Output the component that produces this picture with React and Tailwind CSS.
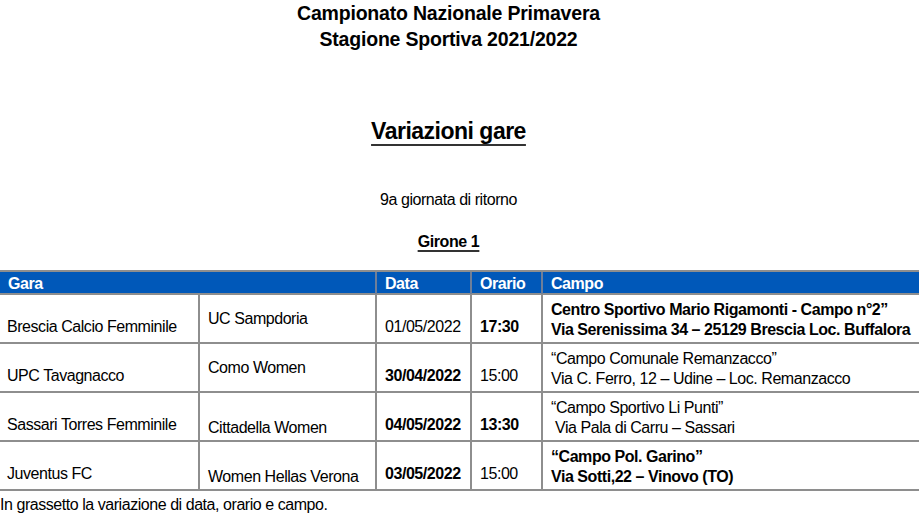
import React from "react";

const rows = [
  {
    a: "Brescia Calcio Femminile",
    b: "UC Sampdoria",
    bTop: "pt-[14px]",
    data: "01/05/2022",
    dataBold: false,
    ora: "17:30",
    oraBold: true,
    c1: "Centro Sportivo Mario Rigamonti - Campo n°2”",
    c2: "Via Serenissima 34 – 25129 Brescia Loc. Buffalora",
    cBold: true,
  },
  {
    a: "UPC Tavagnacco",
    b: "Como Women",
    bTop: "pt-[14px]",
    data: "30/04/2022",
    dataBold: true,
    ora: "15:00",
    oraBold: false,
    c1: "“Campo Comunale Remanzacco”",
    c2: "Via C. Ferro, 12 – Udine – Loc. Remanzacco",
    cBold: false,
  },
  {
    a: "Sassari Torres Femminile",
    b: "Cittadella Women",
    bTop: "pt-[25px]",
    data: "04/05/2022",
    dataBold: true,
    ora: "13:30",
    oraBold: true,
    c1: "“Campo Sportivo Li Punti”",
    c2: " Via Pala di Carru – Sassari",
    cBold: false,
  },
  {
    a: "Juventus FC",
    b: "Women Hellas Verona",
    bTop: "pt-[25px]",
    data: "03/05/2022",
    dataBold: true,
    ora: "15:00",
    oraBold: false,
    c1: "“Campo Pol. Garino”",
    c2: "Via Sotti,22 – Vinovo (TO)",
    cBold: true,
  },
];

export default function App() {
  return (
    <div className="w-[919px] h-[515px] overflow-hidden bg-white text-black font-['Liberation_Sans',Arial,sans-serif]">
      <div className="w-[897px] text-center">
        <div className="text-[19.5px] leading-[26px] font-bold tracking-[-0.2px]">
          <div>Campionato Nazionale Primavera</div>
          <div>Stagione Sportiva 2021/2022</div>
        </div>
        <div className="mt-[66px] text-[23px] leading-[26px] font-bold tracking-[-0.5px]">
          <span className="underline decoration-2 underline-offset-[5px] decoration-[#333]">
            Variazioni gare
          </span>
        </div>
        <div className="mt-[46px] text-[16px] leading-[20px] tracking-[-0.45px]">9a giornata di ritorno</div>
        <div className="mt-[22px] text-[16px] leading-[20px] font-bold tracking-[-0.4px]">
          <span className="underline decoration-[1.5px] underline-offset-[3px] decoration-[#333]">
            Girone 1
          </span>
        </div>
      </div>

      <div className="mt-[18px] border-t-2 border-[#8e8e8e] text-[16px] leading-[20px] tracking-[-0.45px]">
        <div className="grid grid-cols-[200px_177px_95px_71px_1fr] h-[23px] bg-[#0058b9] border-b-2 border-[#8e8e8e] text-white font-bold">
          <div className="col-span-2 border-r-2 border-[#6f7f99] pl-[8px] pt-[2px]">Gara</div>
          <div className="border-r-2 border-[#6f7f99] pl-[8px] pt-[2px]">Data</div>
          <div className="border-r-2 border-[#6f7f99] pl-[8px] pt-[2px]">Orario</div>
          <div className="pl-[8px] pt-[2px]">Campo</div>
        </div>
        {rows.map((r, i) => (
          <div
            key={i}
            className="grid grid-cols-[200px_177px_95px_71px_1fr] h-[49px] border-b-2 border-[#8e8e8e]"
          >
            <div className="border-r-2 border-[#8e8e8e] pl-[7px] pt-[22px] whitespace-nowrap">{r.a}</div>
            <div className={`border-r-2 border-[#8e8e8e] pl-[8px] whitespace-nowrap ${r.bTop}`}>{r.b}</div>
            <div className={`border-r-2 border-[#8e8e8e] pl-[8px] pt-[22px] ${r.dataBold ? "font-bold" : ""}`}>
              {r.data}
            </div>
            <div className={`border-r-2 border-[#8e8e8e] pl-[8px] pt-[22px] ${r.oraBold ? "font-bold" : ""}`}>
              {r.ora}
            </div>
            <div className={`pl-[8px] pt-[5px] whitespace-pre ${r.cBold ? "font-bold" : ""}`}>
              <div>{r.c1}</div>
              <div>{r.c2}</div>
            </div>
          </div>
        ))}
      </div>
      <div className="mt-[4px] text-[16px] leading-[20px] tracking-[-0.45px]">
        In grassetto la variazione di data, orario e campo.
      </div>
    </div>
  );
}
